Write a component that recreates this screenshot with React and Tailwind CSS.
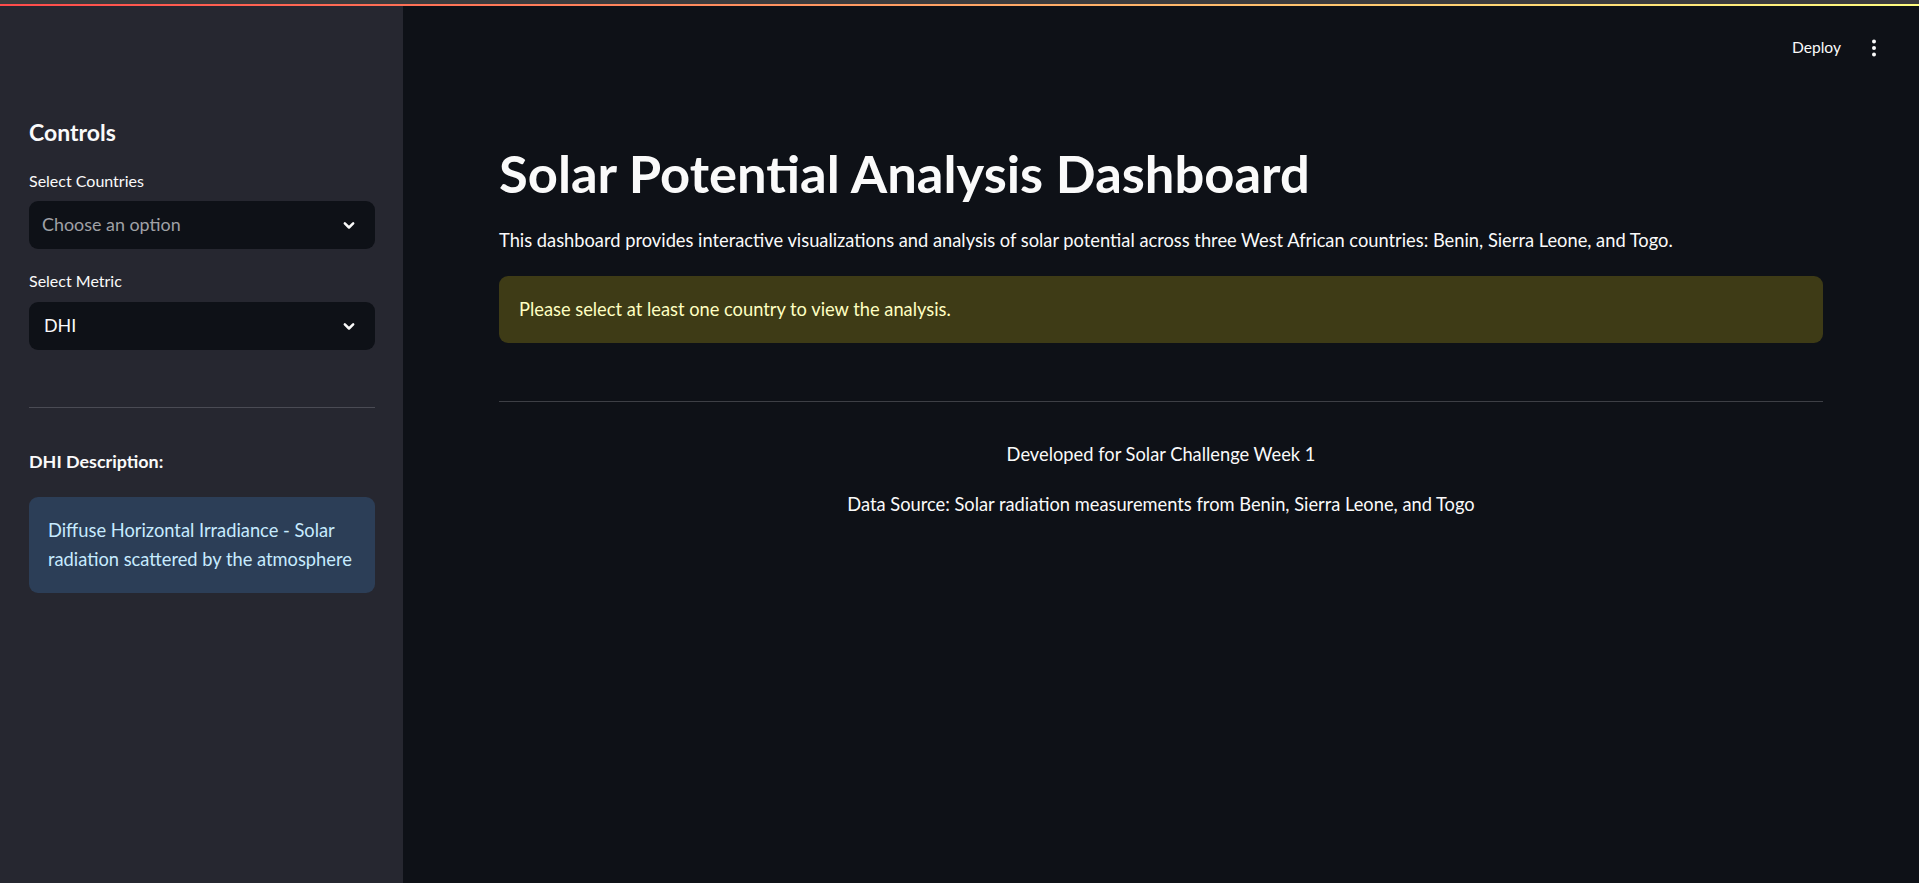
import React from "react";

const font = { fontFamily: "Lato, 'Open Sans', sans-serif" };

function Chevron() {
  return (
    <svg width="20" height="20" viewBox="0 0 24 24" fill="none" stroke="#fafafa" strokeWidth="3" strokeLinecap="round" strokeLinejoin="round">
      <path d="M7 10l5 5 5-5" />
    </svg>
  );
}

function SelectBox({ children, placeholder }) {
  return (
    <div className="flex h-[48px] items-center justify-between rounded-[9px] bg-[#0e1117] pl-[13px] pr-[16px]">
      <span className={placeholder ? "text-[17.9px] text-[#a0a1a6]" : "pl-[2px] text-[17.9px] text-[#fafafa]"}>{children}</span>
      <Chevron />
    </div>
  );
}

export default function App() {
  return (
    <div className="flex h-screen w-full flex-col overflow-hidden bg-[#0e1117] text-[#fafafa]" style={font}>
      <div className="h-[4px] w-full bg-[#3b3b3d]" />
      <div className="h-[2px] w-full bg-[linear-gradient(90deg,#ff4b4b,#fffd80)]" />
      <div className="flex min-h-0 flex-1">
        <aside className="flex w-[403px] shrink-0 flex-col bg-[#262730] pl-[29px] pr-[28px] pt-[112px]">
          <h2 className="text-[23px] font-bold leading-[28.8px]">Controls</h2>
          <div className="mt-[22px] text-[16px] leading-[24px]">Select Countries</div>
          <div className="mt-[8px]">
            <SelectBox placeholder>Choose an option</SelectBox>
          </div>
          <div className="mt-[20px] text-[16px] leading-[24px]">Select Metric</div>
          <div className="mt-[9px]">
            <SelectBox>DHI</SelectBox>
          </div>
          <div className="mt-[57px] h-px w-full bg-[#4a4b54]" />
          <div className="mt-[39px] text-[17.9px] font-bold leading-[28.8px]">DHI Description:</div>
          <div className="mt-[21px] whitespace-nowrap rounded-[9px] bg-[#2c3e57] px-[19px] py-[19px] text-[18.3px] leading-[29px] text-[#c7ebff]">
            Diffuse Horizontal Irradiance - Solar
            <br />
            radiation scattered by the atmosphere
          </div>
        </aside>
        <main className="flex min-w-0 flex-1 flex-col">
          <div className="flex h-[84px] items-center justify-end pr-[33px]">
            <span className="text-[15.6px]">Deploy</span>
            <svg className="ml-[21px]" width="24" height="24" viewBox="0 0 24 24" fill="#fafafa">
              <circle cx="12" cy="5.5" r="2" />
              <circle cx="12" cy="12" r="2" />
              <circle cx="12" cy="18.5" r="2" />
            </svg>
          </div>
          <div className="flex flex-col px-[96px] pt-[51px]">
            <h1 className="text-[52.5px] font-bold leading-[63.4px]">Solar Potential Analysis Dashboard</h1>
            <p className="mt-[22px] text-[18.3px] leading-[28.8px]">
              This dashboard provides interactive visualizations and analysis of solar potential across three West African countries: Benin, Sierra Leone, and Togo.
            </p>
            <div className="mt-[21px] rounded-[9px] bg-[#3e3b16] px-[20px] py-[19px] text-[18.3px] leading-[28.8px] text-[#ffffc2]">
              Please select at least one country to view the analysis.
            </div>
            <div className="mt-[58px] h-px w-full bg-[#3d3f45]" />
            <p className="mt-[38px] text-center text-[18.3px] leading-[28.8px]">Developed for Solar Challenge Week 1</p>
            <p className="mt-[21px] text-center text-[18.3px] leading-[28.8px]">
              Data Source: Solar radiation measurements from Benin, Sierra Leone, and Togo
            </p>
          </div>
        </main>
      </div>
    </div>
  );
}
